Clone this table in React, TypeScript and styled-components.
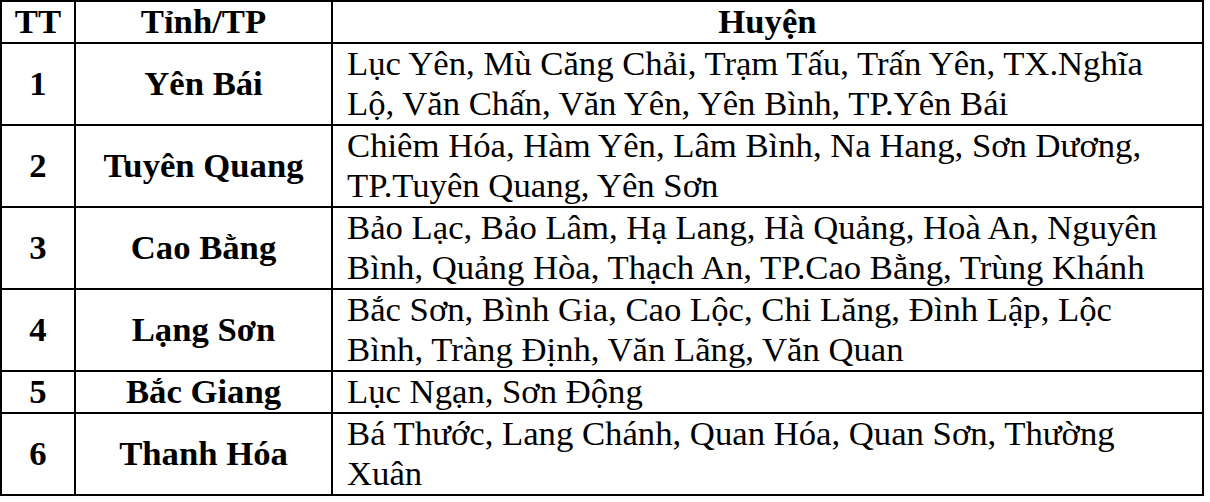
import React from "react";
import styled, { createGlobalStyle } from "styled-components";

const Global = createGlobalStyle`
  html, body { margin: 0; padding: 0; background: #ffffff; }
  body { font-family: "Liberation Serif", "Times New Roman", serif; color: #000; }
`;

const Table = styled.table`
  border-collapse: collapse;
  table-layout: fixed;
  width: 1204px;
  font-family: "Liberation Serif", "Times New Roman", serif;
  font-size: 34.7px;
  line-height: 40px;
  border: 2px solid #000;
`;

const HeadCell = styled.th`
  border: 2px solid #000;
  font-weight: bold;
  text-align: center;
  padding: 0;
  height: 40px;
`;

const Cell = styled.td<{ $bold?: boolean; $left?: boolean }>`
  border: 2px solid #000;
  font-weight: ${(p) => (p.$bold ? "bold" : "normal")};
  text-align: ${(p) => (p.$left ? "left" : "center")};
  padding: ${(p) => (p.$left ? "0 22px 0 14px" : "0")};
  vertical-align: middle;
`;

const rows = [
  ["1", "Yên Bái", "Lục Yên, Mù Căng Chải, Trạm Tấu, Trấn Yên, TX.Nghĩa Lộ, Văn Chấn, Văn Yên, Yên Bình, TP.Yên Bái"],
  ["2", "Tuyên Quang", "Chiêm Hóa, Hàm Yên, Lâm Bình, Na Hang, Sơn Dương, TP.Tuyên Quang, Yên Sơn"],
  ["3", "Cao Bằng", "Bảo Lạc, Bảo Lâm, Hạ Lang, Hà Quảng, Hoà An, Nguyên Bình, Quảng Hòa, Thạch An, TP.Cao Bằng, Trùng Khánh"],
  ["4", "Lạng Sơn", "Bắc Sơn, Bình Gia, Cao Lộc, Chi Lăng, Đình Lập, Lộc Bình, Tràng Định, Văn Lãng, Văn Quan"],
  ["5", "Bắc Giang", "Lục Ngạn, Sơn Động"],
  ["6", "Thanh Hóa", "Bá Thước, Lang Chánh, Quan Hóa, Quan Sơn, Thường Xuân"],
];

export default function App() {
  return (
    <>
      <Global />
      <Table>
        <colgroup>
          <col style={{ width: 74 }} />
          <col style={{ width: 257 }} />
          <col />
        </colgroup>
        <thead>
          <tr>
            <HeadCell>TT</HeadCell>
            <HeadCell>Tỉnh/TP</HeadCell>
            <HeadCell>Huyện</HeadCell>
          </tr>
        </thead>
        <tbody>
          {rows.map((r) => (
            <tr key={r[0]}>
              <Cell $bold>{r[0]}</Cell>
              <Cell $bold>{r[1]}</Cell>
              <Cell $left>{r[2]}</Cell>
            </tr>
          ))}
        </tbody>
      </Table>
    </>
  );
}
